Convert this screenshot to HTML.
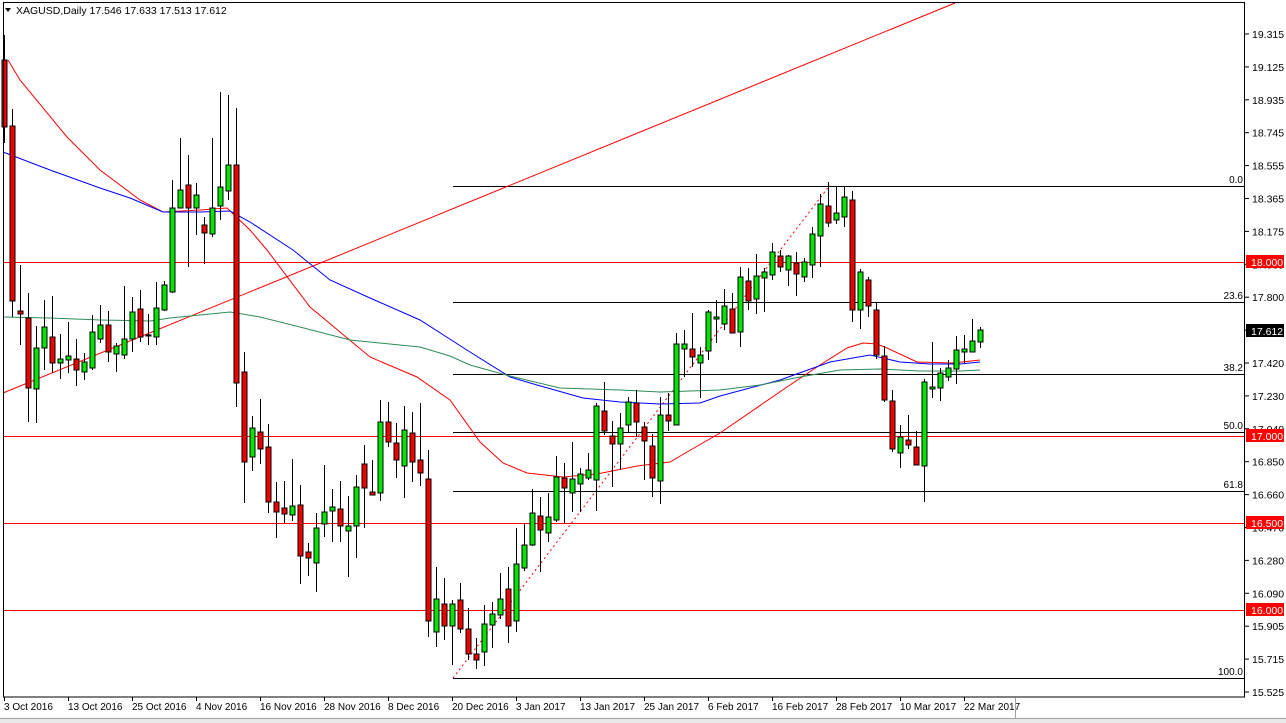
<!DOCTYPE html>
<html><head><meta charset="utf-8"><style>
html,body{margin:0;padding:0;background:#fff;width:1286px;height:723px;overflow:hidden}
svg{display:block;font-family:"Liberation Sans",sans-serif}
</style></head><body>
<svg id="c" width="1286" height="723" xmlns="http://www.w3.org/2000/svg">
<rect x="0" y="0" width="1286" height="723" fill="#fff"/>
<rect x="0" y="718" width="1286" height="5" fill="#e8e8e8"/>
<line x1="0" y1="718.5" x2="1286" y2="718.5" stroke="#a0a0a0"/>
<g id="g"></g>
</svg>
<script>
var NS="http://www.w3.org/2000/svg",g=document.getElementById('g');
function el(t,a,txt){var e=document.createElementNS(NS,t);for(var k in a)e.setAttribute(k,a[k]);if(txt!==undefined)e.textContent=txt;g.appendChild(e);return e;}
[262,436,523,610].forEach(function(y){el('line',{x1:3,y1:y+.5,x2:1245,y2:y+.5,stroke:'#ff0000','stroke-width':1});});
[[186,'0.0'],[302,'23.6'],[374,'38.2'],[432,'50.0'],[491,'61.8'],[678,'100.0']].forEach(function(f){
 el('line',{x1:453,y1:f[0]+.5,x2:1245,y2:f[0]+.5,stroke:'#000','stroke-width':1});
 el('text',{x:1243,y:f[0]-3,'text-anchor':'end','font-size':10,fill:'#000'},f[1]);});
el('line',{x1:3,y1:393,x2:955,y2:3,stroke:'#ff0000','stroke-width':1});
el('line',{x1:453,y1:678,x2:830,y2:185,stroke:'#ff0000','stroke-width':1,'stroke-dasharray':'2,3'});
function pl(pts,c){el('polyline',{points:pts,fill:'none',stroke:c,'stroke-width':1});}
pl("8,60 20,80 67,137 100,170 140,200 163,212 200,210 227,208 250,230 267,250 310,307 370,357 417,377 450,400 480,442 503,463 527,473 563,477 597,474 637,466 670,462 687,452 720,433 787,387 820,365 847,348 863,343 877,344 887,348 917,362 953,363 980,360","#ff0000");
pl("3,152 50,170 100,188 130,198 163,212 200,212 230,211 250,222 293,250 330,280 370,298 420,320 470,352 510,377 537,385 583,398 620,402 660,404 700,403 720,396 780,380 830,362 870,355 900,362 930,364 960,364 980,362","#0000ff");
pl("3,317 50,318 100,320 150,321 170,318 230,312 260,317 300,327 350,340 400,345 420,347 450,356 470,365 510,376 560,388 620,390 660,392 720,390 760,385 800,377 840,370 880,369 920,371 960,371 980,370","#2e8b57");
var d=[[60,127,35,143],[126,301,109,317],[311,314,265,345],[318,388,293,422],[389,348,326,423],[348,327,300,370],[337,363,296,373],[363,359,334,379],[360,356,322,373],[359,370,339,386],[372,362,353,380],[368,332,315,370],[339,325,305,343],[325,352,311,362],[354,346,343,372],[355,339,286,359],[339,312,297,352],[309,337,290,342],[336,335,314,345],[337,308,282,345],[310,285,281,311],[292,208,180,293],[208,190,138,208],[185,208,155,267],[208,195,183,235],[225,233,217,264],[234,208,138,237],[206,187,92,220],[191,165,95,200],[165,383,108,407],
[372,462,352,503],[457,428,416,471],[432,449,399,464],[447,502,424,513],[502,512,482,538],[508,514,481,523],[515,506,459,521],[505,556,485,584],[552,558,543,576],[563,528,513,592],[524,512,465,537],[511,507,489,542],[509,526,481,542],[531,526,496,577],[526,487,475,558],[464,488,445,528],[492,495,460,495],[493,422,400,501],[422,442,402,447],[443,460,423,478],[466,430,406,498],[433,462,412,482],[460,473,403,486],[479,621,450,637],[632,599,567,647],[604,626,578,640],[626,604,600,665],[600,629,583,633],[629,654,608,660],[654,660,638,669],
[652,624,605,666],[625,614,602,648],[615,599,573,619],[589,626,567,643],[621,564,528,632],[568,545,523,571],[545,513,489,546],[516,530,497,572],[533,517,493,542],[520,477,456,522],[478,488,463,523],[493,479,442,512],[484,474,468,512],[478,470,453,480],[480,406,403,511],[411,431,382,435],[436,444,421,487],[444,428,413,470],[425,402,397,433],[403,422,390,437],[427,441,422,480],[446,478,434,497],[481,415,397,504],[415,421,393,431],[425,344,333,425],[349,344,330,377],[349,357,313,367],[363,355,347,398],[351,312,310,360],[319,317,300,343],
[324,306,289,330],[309,333,293,333],[332,277,267,347],[281,301,268,310],[299,276,254,314],[278,272,268,312],[275,252,243,280],[256,267,250,272],[270,256,255,286],[263,274,252,296],[277,262,258,282],[265,234,227,278],[236,204,194,267],[206,223,182,227],[220,213,187,224],[217,197,187,227],[200,310,191,322],[310,272,269,329],[280,306,277,317],[310,355,303,359],[356,400,346,402],[401,449,390,452],[453,437,425,468],[440,445,415,449],[447,465,431,465],[466,382,379,502],[389,387,342,398],[388,373,368,401],[377,368,360,381],[369,350,336,384],[352,349,335,363],[352,341,319,352],[342,330,327,348]];
d.forEach(function(c,i){var x=4.5+8*i,o=c[0],cl=c[1],h=c[2],l=c[3];
 el('line',{x1:x,y1:h,x2:x,y2:l,stroke:'#000','stroke-width':1});
 var top=Math.min(o,cl),bh=Math.max(Math.abs(o-cl),1);
 el('rect',{x:x-2.5,y:top,width:5,height:bh,fill:(cl<o?'#00e600':'#ee0000'),stroke:'#000','stroke-width':1});});
el('rect',{x:3.5,y:2.5,width:1241,height:694.5,fill:'none',stroke:'#000','stroke-width':1});
el('path',{d:'M5 8 L11 8 L8 12 Z',fill:'#000'});
el('text',{x:16,y:14,'font-size':10.5,fill:'#000'},'XAGUSD,Daily  17.546 17.633 17.513 17.612');
var labs=['19.315','19.125','18.935','18.745','18.555','18.365','18.175','17.985','17.800','17.612','17.420','17.230','17.040','16.850','16.660','16.470','16.280','16.090','15.905','15.715','15.525'];
labs.forEach(function(t,i){var y=34+i*32.9;
 el('line',{x1:1245,y1:y,x2:1249,y2:y,stroke:'#000'});
 el('text',{x:1252,y:y+4,'font-size':10.5,fill:'#000'},t);});
function box(y,t,bg){el('rect',{x:1246,y:y-7,width:38,height:13,fill:bg});el('text',{x:1251,y:y+4,'font-size':10.5,fill:'#fff'},t);}
box(262,'18.000','#ff0000');box(436,'17.000','#ff0000');box(523,'16.500','#ff0000');box(610,'16.000','#ff0000');box(331,'17.612','#000');
var dates=['3 Oct 2016','13 Oct 2016','25 Oct 2016','4 Nov 2016','16 Nov 2016','28 Nov 2016','8 Dec 2016','20 Dec 2016','3 Jan 2017','13 Jan 2017','25 Jan 2017','6 Feb 2017','16 Feb 2017','28 Feb 2017','10 Mar 2017','22 Mar 2017'];
dates.forEach(function(t,i){var x=4+64*i;
 el('line',{x1:x+.5,y1:697,x2:x+.5,y2:701,stroke:'#000'});
 el('text',{x:x,y:710,'font-size':10,fill:'#000'},t);});
el('line',{x1:1015.5,y1:698,x2:1015.5,y2:718,stroke:'#a0a0a0'});
</script>
</body></html>
